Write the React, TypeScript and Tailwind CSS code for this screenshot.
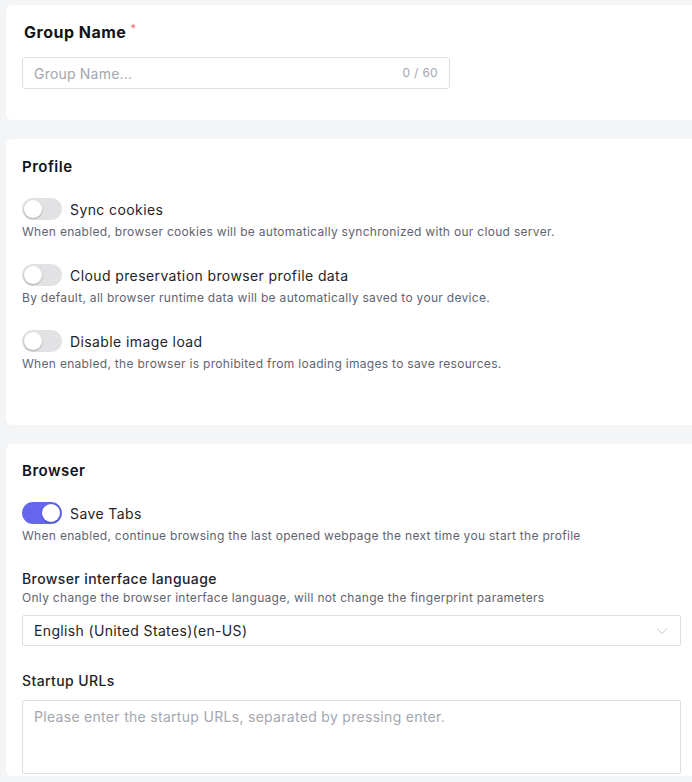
import { useState } from 'react';

interface ToggleRowProps {
  label: string;
  description: string;
  defaultOn?: boolean;
}

function Switch({ on, onChange }: { on: boolean; onChange: () => void }) {
  return (
    <button
      onClick={onChange}
      className={`relative w-[40px] h-[22px] rounded-full shrink-0 transition-colors ${
        on ? 'bg-[#6467ee]' : 'bg-[#e2e2e4]'
      }`}
    >
      <span
        className={`absolute top-[2px] w-[18px] h-[18px] rounded-full bg-white shadow-[0_1px_2px_rgba(0,0,0,0.25)] transition-all ${
          on ? 'left-[20px]' : 'left-[2px]'
        }`}
      />
    </button>
  );
}

function ToggleRow({ label, description, defaultOn = false }: ToggleRowProps) {
  const [on, setOn] = useState(defaultOn);
  return (
    <div>
      <div className="flex items-center gap-2 h-[22px]">
        <Switch on={on} onChange={() => setOn(!on)} />
        <span className="text-[14px] tracking-[0.4px] text-[#1f2329]">{label}</span>
      </div>
      <p className="mt-[3px] text-[12px] leading-[18px] tracking-[0.3px] text-[#5f6470]">{description}</p>
    </div>
  );
}

export default function App() {
  const [name, setName] = useState('');

  return (
    <div
      className="min-h-[782px] bg-[#f4f5f7] pl-[6px] pt-[5px] flex flex-col gap-[19px]"
      style={{ fontFamily: 'Inter, "Noto Sans", sans-serif' }}
    >
      {/* group name */}
      <section className="bg-white rounded-l-[6px] pl-4 pr-[11px] pt-[16px] pb-[31px]">
        <h2 className="text-[16px] leading-[22px] font-bold tracking-[0.5px] text-[#111318] flex items-start pl-[2px]">
          Group Name
          <span className="text-[#f56c6c] text-[11px] leading-[14px] ml-[4px] font-normal">*</span>
        </h2>
        <div className="mt-[14px] w-[428px] h-[32px] border border-[#dcdfe6] rounded-[3px] flex items-center px-[11px]">
          <input
            value={name}
            onChange={e => setName(e.target.value.slice(0, 60))}
            placeholder="Group Name..."
            className="flex-1 min-w-0 outline-none text-[14px] tracking-[0.2px] text-[#1f2329] placeholder:text-[#a3a7b0]"
          />
          <span className="text-[12px] tracking-[0.3px] text-[#a3a7b0]">{name.length} / 60</span>
        </div>
      </section>

      {/* profile */}
      <section className="bg-white rounded-l-[6px] pl-4 pr-[11px] pt-[17px] pb-[52px]">
        <h2 className="text-[15px] leading-[22px] font-semibold tracking-[0.5px] text-[#111318]">Profile</h2>
        <div className="mt-[20px] flex flex-col gap-[23px]">
          <ToggleRow
            label="Sync cookies"
            description="When enabled, browser cookies will be automatically synchronized with our cloud server."
          />
          <ToggleRow
            label="Cloud preservation browser profile data"
            description="By default, all browser runtime data will be automatically saved to your device."
          />
          <ToggleRow
            label="Disable image load"
            description="When enabled, the browser is prohibited from loading images to save resources."
          />
        </div>
      </section>

      {/* browser */}
      <section className="bg-white rounded-l-[6px] pl-4 pr-[11px] pt-[16px] pb-[2px]">
        <h2 className="text-[15px] leading-[22px] font-semibold tracking-[0.5px] text-[#111318]">Browser</h2>
        <div className="mt-[20px]">
          <ToggleRow
            defaultOn
            label="Save Tabs"
            description="When enabled, continue browsing the last opened webpage the next time you start the profile"
          />
        </div>

        <div className="mt-[24px]">
          <h3 className="text-[14px] leading-[20px] font-medium tracking-[0.4px] text-[#1f2329]">
            Browser interface language
          </h3>
          <p className="text-[12px] leading-[18px] tracking-[0.3px] text-[#5f6470]">
            Only change the browser interface language, will not change the fingerprint parameters
          </p>
          <div className="mt-[8px] h-[31px] border border-[#dcdfe6] rounded-[2px] flex items-center justify-between px-[11px]">
            <span className="text-[14px] tracking-[0.35px] text-[#1f2329]">English (United States)(en-US)</span>
            <svg width="12" height="8" viewBox="0 0 12 8" fill="none" className="mr-[1px]">
              <path d="M1 1.5l5 5 5-5" stroke="#c0c4cc" strokeWidth="1" />
            </svg>
          </div>
        </div>

        <div className="mt-[25px]">
          <h3 className="text-[14px] leading-[20px] font-medium tracking-[0.4px] text-[#1f2329]">Startup URLs</h3>
          <textarea
            placeholder="Please enter the startup URLs, separated by pressing enter."
            className="mt-[9px] block w-full h-[74px] border border-[#dcdfe6] rounded-[2px] px-[11px] py-[5px] text-[14px] leading-[22px] tracking-[0.3px] outline-none resize-none placeholder:text-[#a3a7b0]"
          />
        </div>
      </section>
    </div>
  );
}
